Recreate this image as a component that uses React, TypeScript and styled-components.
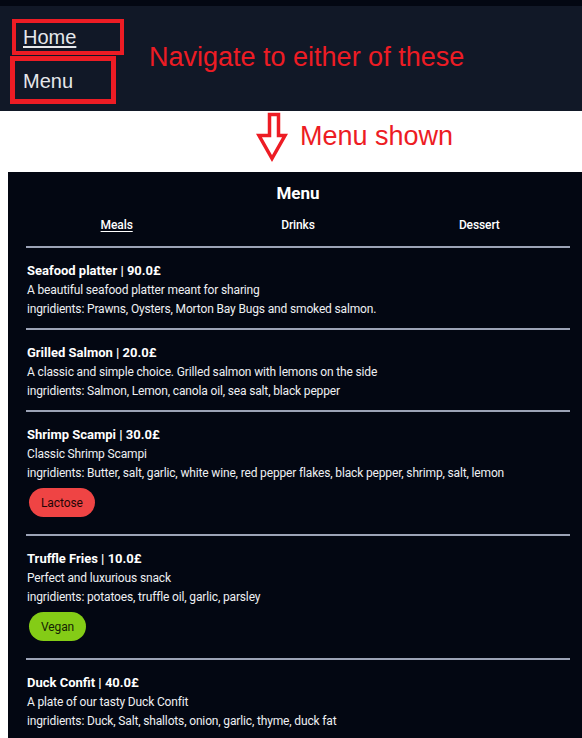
import React from "react";
import styled, { createGlobalStyle } from "styled-components";

const GlobalStyle = createGlobalStyle`
  html, body { margin: 0; padding: 0; background: #ffffff; }
  body { font-family: Roboto, "Liberation Sans", sans-serif; }
  * { box-sizing: border-box; }
`;

const Page = styled.div`
  display: flex;
  flex-direction: column;
  width: 582px;
  min-height: 738px;
  overflow: hidden;
`;

const TopStrip = styled.div`
  height: 6px;
  background: #030712;
`;

const NavBar = styled.nav`
  display: flex;
  align-items: center;
  height: 105px;
  padding: 9px 0 8px 23px;
  background: #111827;
`;

const NavLinks = styled.div`
  display: flex;
  flex-direction: column;
  width: 126px;
`;

const NavItem = styled.div`
  position: relative;
  height: 44px;
  display: flex;
  align-items: center;
`;

const NavLink = styled.a<{ $active?: boolean }>`
  font-family: "Liberation Sans", Arial, sans-serif;
  font-size: 20px;
  line-height: 23px;
  color: #e5e7eb;
  text-decoration: ${(p) => (p.$active ? "underline" : "none")};
  text-underline-offset: 2px;
  text-decoration-thickness: 1.5px;
  cursor: pointer;
`;

const RedBox = styled.span<{ $l: number; $t: number; $w: number; $h: number; $b: number }>`
  position: absolute;
  left: ${(p) => p.$l}px;
  top: ${(p) => p.$t}px;
  width: ${(p) => p.$w}px;
  height: ${(p) => p.$h}px;
  border: ${(p) => p.$b}px solid #ed1c24;
  pointer-events: none;
`;

const Annotation = styled.span`
  font-family: "Liberation Sans", Arial, sans-serif;
  font-size: 27px;
  line-height: 31px;
  color: #ed1c24;
  margin-bottom: 4px;
`;

const AnnotationRow = styled.div`
  display: flex;
  align-items: center;
  height: 61px;
  padding-left: 256px;
  gap: 12px;
  background: #ffffff;
`;

const ArrowSvg = styled.svg`
  flex: none;
  align-self: flex-start;
`;

const ArrowLabel = styled(Annotation)`
  margin-bottom: 10px;
`;

const MenuPanel = styled.section`
  flex: 1;
  margin-left: 8px;
  padding: 8px 12px 0 18px;
  background: #030712;
  color: #ffffff;
`;

const MenuTitle = styled.h1`
  margin: 0;
  text-align: center;
  font-size: 17px;
  line-height: 26px;
  font-weight: 700;
  color: #ffffff;
`;

const Tabs = styled.div`
  display: grid;
  grid-template-columns: repeat(3, 1fr);
  margin-top: 10px;
`;

const Tab = styled.a<{ $active?: boolean }>`
  text-align: center;
  font-size: 12px;
  line-height: 18px;
  font-weight: 500;
  letter-spacing: -0.1px;
  color: #ffffff;
  text-decoration: ${(p) => (p.$active ? "underline" : "none")};
  text-underline-offset: 2px;
  cursor: pointer;
`;

const Divider = styled.hr`
  margin: 0;
  height: 2px;
  border: none;
  background: #9ca3b6;
`;

const TabsDivider = styled(Divider)`
  margin-top: 12px;
`;

const Item = styled.article`
  padding: 13px 0 9px 1px;
`;

const ItemTitle = styled.h2`
  margin: 0;
  font-size: 13px;
  line-height: 20px;
  font-weight: 700;
  color: #ffffff;
`;

const ItemText = styled.p`
  margin: 0;
  font-size: 12px;
  line-height: 19px;
  letter-spacing: -0.15px;
  color: #eef0f3;
`;

const Tags = styled.div`
  display: flex;
  gap: 6px;
  padding: 5px 0 8px 2px;
`;

const Tag = styled.span<{ $bg: string; $fg: string }>`
  display: inline-flex;
  align-items: center;
  height: 29px;
  padding: 0 12px;
  border-radius: 15px;
  background: ${(p) => p.$bg};
  color: ${(p) => p.$fg};
  font-size: 12px;
  letter-spacing: -0.1px;
`;

type MenuItem = {
  name: string;
  price: string;
  description: string;
  ingredients: string;
  tags?: { label: string; bg: string; fg: string }[];
};

const items: MenuItem[] = [
  {
    name: "Seafood platter",
    price: "90.0£",
    description: "A beautiful seafood platter meant for sharing",
    ingredients: "ingridients: Prawns, Oysters, Morton Bay Bugs and smoked salmon.",
  },
  {
    name: "Grilled Salmon",
    price: "20.0£",
    description: "A classic and simple choice. Grilled salmon with lemons on the side",
    ingredients: "ingridients: Salmon, Lemon, canola oil, sea salt, black pepper",
  },
  {
    name: "Shrimp Scampi",
    price: "30.0£",
    description: "Classic Shrimp Scampi",
    ingredients:
      "ingridients: Butter, salt, garlic, white wine, red pepper flakes, black pepper, shrimp, salt, lemon",
    tags: [{ label: "Lactose", bg: "#ef4444", fg: "#1f0606" }],
  },
  {
    name: "Truffle Fries",
    price: "10.0£",
    description: "Perfect and luxurious snack",
    ingredients: "ingridients: potatoes, truffle oil, garlic, parsley",
    tags: [{ label: "Vegan", bg: "#84cc16", fg: "#142303" }],
  },
  {
    name: "Duck Confit",
    price: "40.0£",
    description: "A plate of our tasty Duck Confit",
    ingredients: "ingridients: Duck, Salt, shallots, onion, garlic, thyme, duck fat",
  },
];

export default function App() {
  return (
    <>
      <GlobalStyle />
      <Page>
        <TopStrip />
        <NavBar>
          <NavLinks>
            <NavItem>
              <NavLink $active>Home</NavLink>
              <RedBox $l={-11} $t={4} $w={112} $h={36} $b={4} />
            </NavItem>
            <NavItem>
              <NavLink>Menu</NavLink>
              <RedBox $l={-13} $t={-3} $w={106} $h={48} $b={5} />
            </NavItem>
          </NavLinks>
          <Annotation>Navigate to either of these</Annotation>
        </NavBar>
        <AnnotationRow>
          <ArrowSvg width="32" height="52" viewBox="0 0 32 52">
            <polygon
              points="13.5,3.5 22.5,3.5 22.5,24.5 29,24.5 16,47.5 3,24.5 13.5,24.5"
              fill="#ffffff"
              stroke="#ed1c24"
              strokeWidth="3.5"
              strokeLinejoin="miter"
            />
          </ArrowSvg>
          <ArrowLabel>Menu shown</ArrowLabel>
        </AnnotationRow>
        <MenuPanel>
          <MenuTitle>Menu</MenuTitle>
          <Tabs>
            <Tab $active>Meals</Tab>
            <Tab>Drinks</Tab>
            <Tab>Dessert</Tab>
          </Tabs>
          <TabsDivider />
          {items.map((item, i) => (
            <React.Fragment key={item.name}>
              <Item>
                <ItemTitle>
                  {item.name} | {item.price}
                </ItemTitle>
                <ItemText>{item.description}</ItemText>
                <ItemText>{item.ingredients}</ItemText>
                {item.tags && (
                  <Tags>
                    {item.tags.map((t) => (
                      <Tag key={t.label} $bg={t.bg} $fg={t.fg}>
                        {t.label}
                      </Tag>
                    ))}
                  </Tags>
                )}
              </Item>
              {i < items.length - 1 && <Divider />}
            </React.Fragment>
          ))}
        </MenuPanel>
      </Page>
    </>
  );
}
